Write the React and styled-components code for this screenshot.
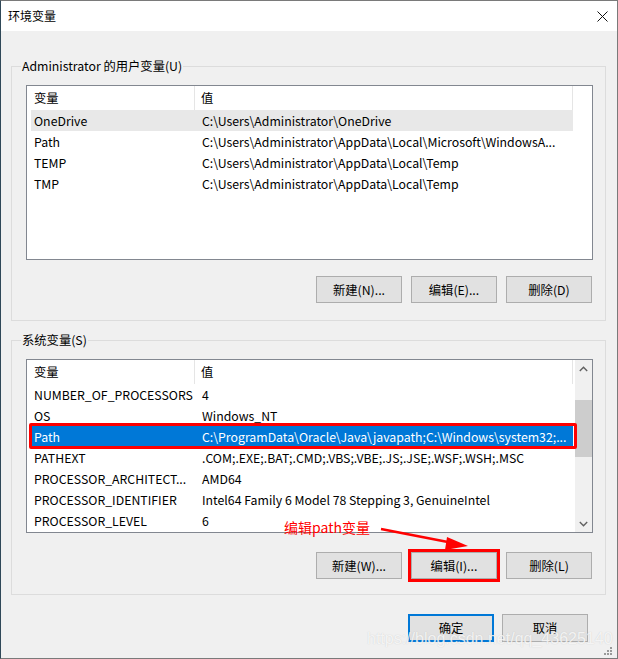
import React from "react";
import styled, { createGlobalStyle } from "styled-components";

const GlobalStyle = createGlobalStyle`
  html, body { margin: 0; padding: 0; background: #2f4858; }
  * { box-sizing: border-box; }
`;

const FONT = `"Microsoft YaHei UI", "Noto Sans CJK SC", "Noto Sans", sans-serif`;

const Window = styled.div`
  position: relative;
  width: 618px;
  height: 659px;
  background: #f0f0f0;
  border: 1px solid #7a7a7a;
  border-left-color: #2f4858;
  font-family: ${FONT};
  font-size: 12.3px;
  color: #000;
  display: flex;
  flex-direction: column;
  overflow: hidden;
`;

const TitleBar = styled.div`
  height: 30px;
  background: #fff;
  display: flex;
  align-items: center;
  justify-content: space-between;
  padding: 0 9px 0 7px;
  flex-shrink: 0;
`;

const Title = styled.span`
  font-size: 12px;
  line-height: 16px;
`;

const CloseBtn = styled.span`
  display: flex;
  width: 12px;
  height: 12px;
  align-items: center;
  justify-content: center;
`;

const Body = styled.div`
  flex: 1;
  display: flex;
  flex-direction: column;
  padding: 27px 11px 0 10px;
`;

const Group = styled.fieldset`
  margin: ${(p) => p.$mt || 0}px 0 0 0;
  padding: 0;
  border: 1px solid #dcdcdc;
  min-width: 0;
`;

const Legend = styled.legend`
  margin-left: 9px;
  padding: 0 1px;
  font-size: 12.3px;
  line-height: 16px;
`;

const GroupContent = styled.div`
  padding: 11px 12px ${(p) => p.$pb}px 14px;
  display: flex;
  flex-direction: column;
`;

const ListView = styled.div`
  height: ${(p) => p.$h}px;
  background: #fff;
  border: 1px solid #828790;
  display: flex;
  overflow: hidden;
`;

const ListMain = styled.div`
  flex: 1;
  display: flex;
  flex-direction: column;
  min-width: 0;
`;

const HeaderRow = styled.div`
  height: 24px;
  display: flex;
  flex-shrink: 0;
`;

const HeadCell = styled.div`
  width: ${(p) => p.$w}px;
  padding-left: ${(p) => p.$pl}px;
  border-right: 1px solid #e5e5e5;
  display: flex;
  align-items: center;
  line-height: 16px;
`;

const Row = styled.div`
  position: relative;
  margin-left: 4px;
  width: 542px;
  height: 21px;
  display: flex;
  align-items: center;
  background: ${(p) =>
    p.$state === "selected" ? "#0078d7" : p.$state === "soft" ? "#e8e8e8" : "transparent"};
  color: ${(p) => (p.$state === "selected" ? "#fff" : "#000")};
`;

const NameCell = styled.div`
  width: 164px;
  padding-left: 3px;
  white-space: nowrap;
  overflow: hidden;
  line-height: 16px;
`;

const ValueCell = styled.div`
  flex: 1;
  padding-left: 7px;
  white-space: nowrap;
  overflow: hidden;
  line-height: 16px;
`;

const RedFrame = styled.span`
  position: absolute;
  top: -3px;
  left: -2px;
  right: -4px;
  bottom: -2px;
  border: 3px solid #ff0000;
  border-radius: 2px;
  pointer-events: none;
`;

const Scrollbar = styled.div`
  width: 17px;
  margin-left: 1px;
  background: #f0f0f0;
  display: flex;
  flex-direction: column;
  align-items: stretch;
`;

const ScrollArrow = styled.div`
  height: 17px;
  display: flex;
  align-items: center;
  justify-content: center;
`;

const ScrollTrack = styled.div`
  flex: 1;
  display: flex;
  flex-direction: column;
`;

const Thumb = styled.div`
  margin-top: 23px;
  height: 57px;
  background: #cdcdcd;
`;

const ButtonRow = styled.div`
  display: flex;
  justify-content: flex-end;
  gap: 9px;
  margin-top: ${(p) => p.$mt}px;
  padding-right: ${(p) => p.$pr || 1}px;
`;

const Button = styled.button`
  width: 86px;
  height: ${(p) => p.$h || 27}px;
  background: #e1e1e1;
  border: ${(p) => (p.$default ? "2px solid #0078d7" : "1px solid #adadad")};
  font-family: ${FONT};
  font-size: 12.3px;
  color: #000;
  padding: 0;
  outline: ${(p) => (p.$marked ? "3px solid #ff0000" : "none")};
  outline-offset: 0;
  border-radius: 0;
`;

const DialogButtons = styled(ButtonRow)`
  gap: 8px;
  margin-top: 19px;
  padding-right: 18px;
`;

const Annotation = styled.span`
  position: absolute;
  left: 283px;
  top: 517px;
  font-family: ${FONT};
  font-size: 14px;
  line-height: 18px;
  color: #ff0000;
  white-space: nowrap;
`;

const ArrowSvg = styled.svg`
  position: absolute;
  left: 370px;
  top: 520px;
  overflow: visible;
`;

const Watermark = styled.span`
  position: absolute;
  left: 366px;
  top: 628px;
  font-family: "Liberation Sans", Arial, sans-serif;
  font-size: 16px;
  line-height: 20px;
  color: rgba(255, 255, 255, 0.8);
  text-shadow: 0 0 1px rgba(150, 150, 150, 0.45);
  white-space: nowrap;
  pointer-events: none;
`;

const Grip = styled.svg`
  position: absolute;
  right: 4px;
  bottom: 2px;
`;

const userVars = [
  ["OneDrive", "C:\\Users\\Administrator\\OneDrive", "soft"],
  ["Path", "C:\\Users\\Administrator\\AppData\\Local\\Microsoft\\WindowsA..."],
  ["TEMP", "C:\\Users\\Administrator\\AppData\\Local\\Temp"],
  ["TMP", "C:\\Users\\Administrator\\AppData\\Local\\Temp"],
];

const sysVars = [
  ["NUMBER_OF_PROCESSORS", "4"],
  ["OS", "Windows_NT"],
  ["Path", "C:\\ProgramData\\Oracle\\Java\\javapath;C:\\Windows\\system32;...", "selected"],
  ["PATHEXT", ".COM;.EXE;.BAT;.CMD;.VBS;.VBE;.JS;.JSE;.WSF;.WSH;.MSC"],
  ["PROCESSOR_ARCHITECT...", "AMD64"],
  ["PROCESSOR_IDENTIFIER", "Intel64 Family 6 Model 78 Stepping 3, GenuineIntel"],
  ["PROCESSOR_LEVEL", "6"],
];

function Header() {
  return (
    <HeaderRow>
      <HeadCell $w={168} $pl={7}>变量</HeadCell>
      <HeadCell $w={378} $pl={6}>值</HeadCell>
    </HeaderRow>
  );
}

function Rows({ data }) {
  return data.map(([n, v, s]) => (
    <Row key={n} $state={s}>
      <NameCell>{n}</NameCell>
      <ValueCell>{v}</ValueCell>
      {s === "selected" && <RedFrame />}
    </Row>
  ));
}

export default function App() {
  return (
    <>
      <GlobalStyle />
      <Window>
        <TitleBar>
          <Title>环境变量</Title>
          <CloseBtn>
            <svg width="11" height="11" viewBox="0 0 11 11">
              <path d="M0.5 0.5 L10.5 10.5 M10.5 0.5 L0.5 10.5" stroke="#111" strokeWidth="1" fill="none" />
            </svg>
          </CloseBtn>
        </TitleBar>
        <Body>
          <Group>
            <Legend>Administrator 的用户变量(U)</Legend>
            <GroupContent $pb={17}>
              <ListView $h={175}>
                <ListMain>
                  <Header />
                  <Rows data={userVars} />
                </ListMain>
              </ListView>
              <ButtonRow $mt={16}>
                <Button>新建(N)...</Button>
                <Button>编辑(E)...</Button>
                <Button>删除(D)</Button>
              </ButtonRow>
            </GroupContent>
          </Group>
          <Group $mt={11}>
            <Legend>系统变量(S)</Legend>
            <GroupContent $pb={15}>
              <ListView $h={174}>
                <ListMain>
                  <Header />
                  <Rows data={sysVars} />
                </ListMain>
                <Scrollbar>
                  <ScrollArrow>
                    <svg width="9" height="6" viewBox="0 0 9 6">
                      <path d="M0.8 5 L4.5 1.3 L8.2 5" stroke="#606060" strokeWidth="1.4" fill="none" />
                    </svg>
                  </ScrollArrow>
                  <ScrollTrack>
                    <Thumb />
                  </ScrollTrack>
                  <ScrollArrow>
                    <svg width="9" height="6" viewBox="0 0 9 6">
                      <path d="M0.8 1 L4.5 4.7 L8.2 1" stroke="#606060" strokeWidth="1.4" fill="none" />
                    </svg>
                  </ScrollArrow>
                </Scrollbar>
              </ListView>
              <ButtonRow $mt={19}>
                <Button>新建(W)...</Button>
                <Button $marked>编辑(I)...</Button>
                <Button>删除(L)</Button>
              </ButtonRow>
            </GroupContent>
          </Group>
          <DialogButtons>
            <Button $default $h={28}>确定</Button>
            <Button $h={28}>取消</Button>
          </DialogButtons>
        </Body>
        <Annotation>编辑path变量</Annotation>
        <ArrowSvg width="100" height="30" viewBox="0 0 100 30">
          <path d="M10 8 L82 22" stroke="#ff0000" strokeWidth="2.5" fill="none" />
          <path d="M97 25 L76 16 L74 29 Z" fill="#ff0000" />
        </ArrowSvg>
        <Watermark>https://blog.csdn.net/qq_43625140</Watermark>
        <Grip width="10" height="10" viewBox="0 0 10 10">
          <rect x="7" y="1" width="2" height="2" fill="#9a9a9a" />
          <rect x="4" y="4" width="2" height="2" fill="#9a9a9a" />
          <rect x="7" y="4" width="2" height="2" fill="#9a9a9a" />
          <rect x="1" y="7" width="2" height="2" fill="#9a9a9a" />
          <rect x="4" y="7" width="2" height="2" fill="#9a9a9a" />
          <rect x="7" y="7" width="2" height="2" fill="#9a9a9a" />
        </Grip>
      </Window>
    </>
  );
}
